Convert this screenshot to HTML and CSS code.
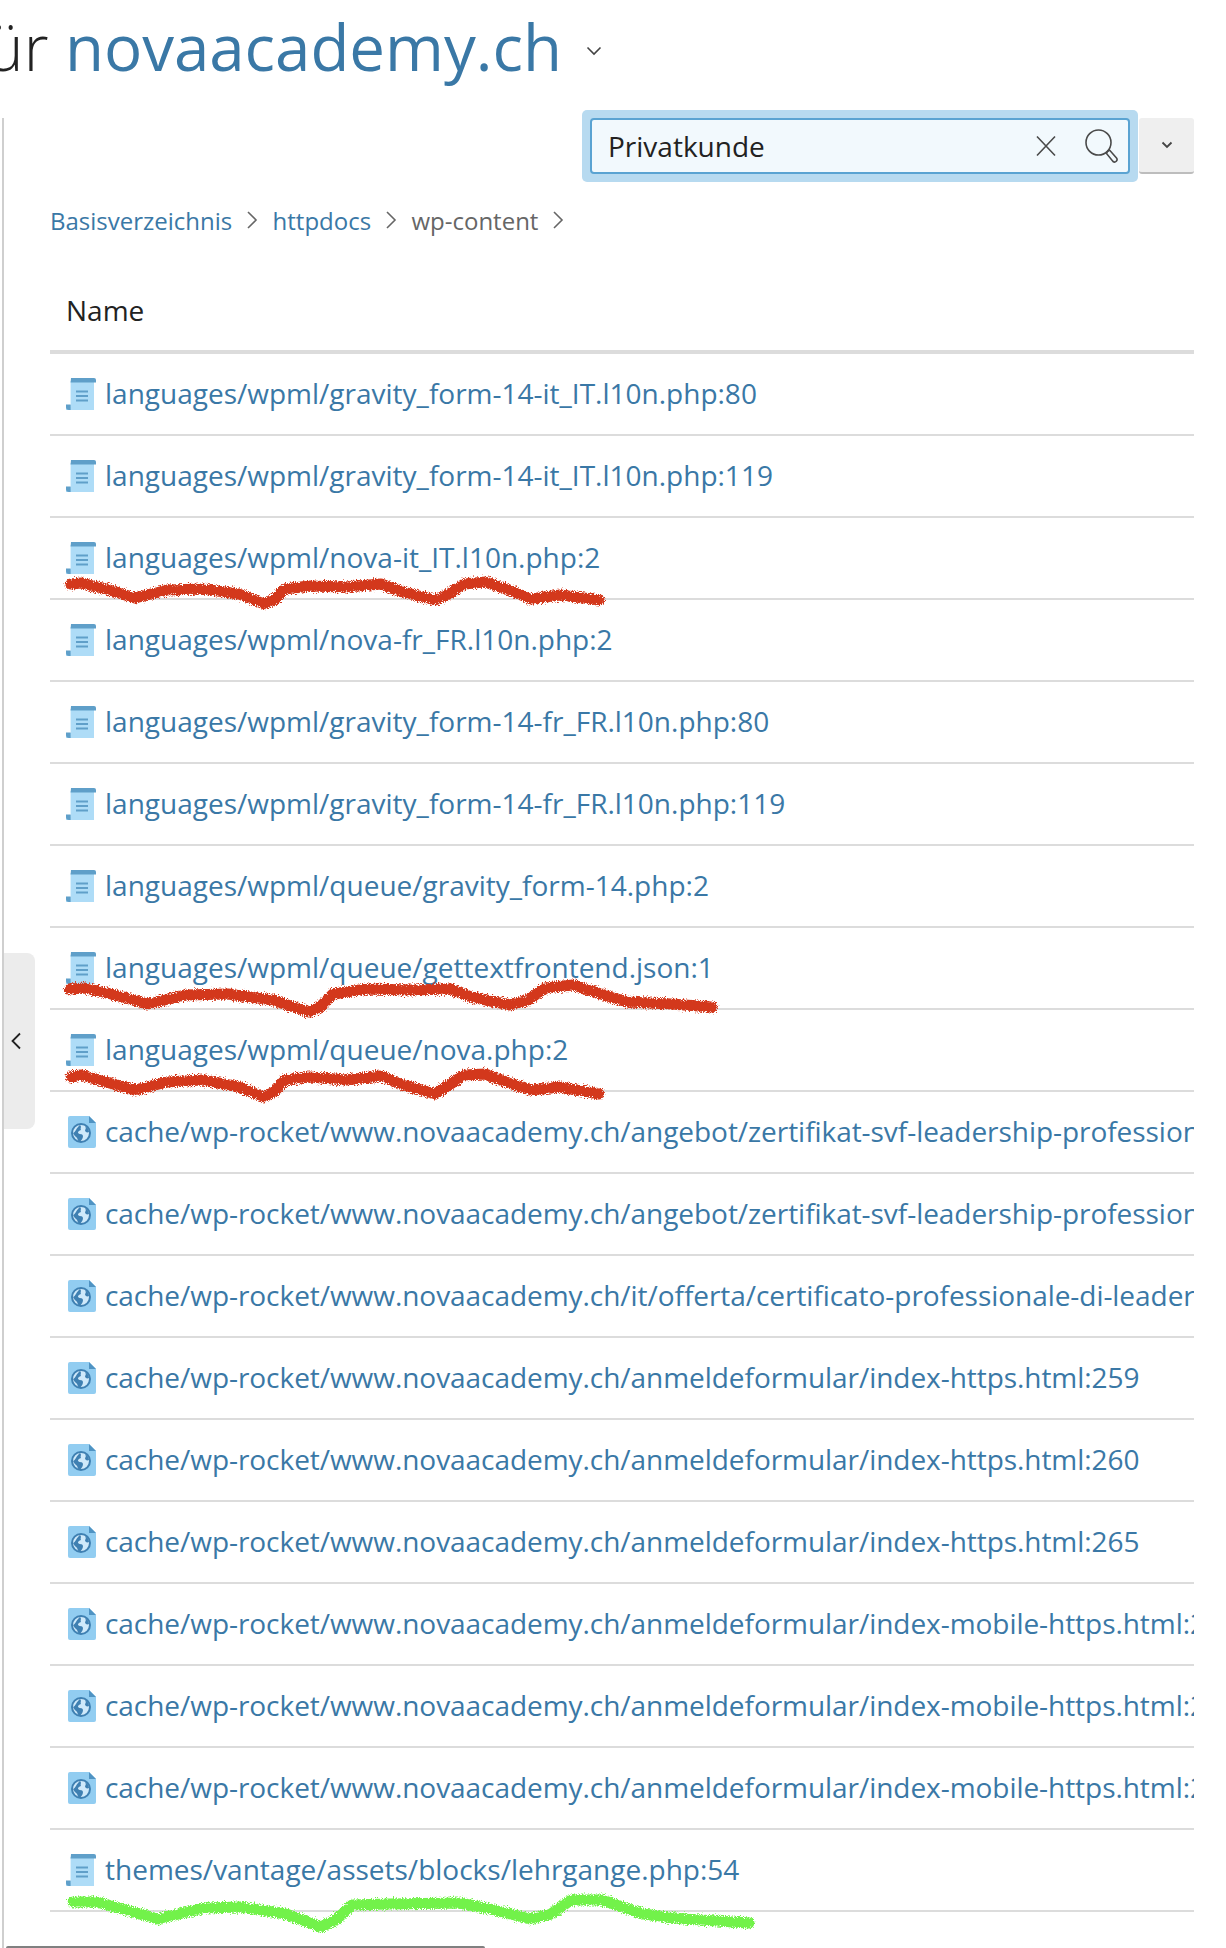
FILE: index.html
```html
<!DOCTYPE html>
<html lang="de">
<head>
<meta charset="utf-8">
<title>Dateien für novaacademy.ch</title>
<link rel="stylesheet" href="styles.css">
</head>
<body>
<svg class="defs" width="0" height="0">
  <defs>
    <filter id="rough" x="-5%" y="-50%" width="110%" height="200%" color-interpolation-filters="sRGB">
      <feTurbulence type="fractalNoise" baseFrequency="0.9" numOctaves="2" seed="4" result="n"/>
      <feDisplacementMap in="SourceGraphic" in2="n" scale="7" xChannelSelector="R" yChannelSelector="G"/>
    </filter>
    <symbol id="doc" viewBox="0 0 30 32">
      <path d="M4.600 3H28v29H0v-5h4.600z" fill="#aedcf7"/>
      <path d="M5 0h23a2 2 0 0 1 2 2v2.400H4.600z" fill="#5f9fc9"/>
      <path d="M0 26.500h4.600V32H3a3 3 0 0 1-3-3z" fill="#5f9fc9"/>
      <path d="M10 13.500h12M10 18h12M10 22.500h12" stroke="#5f9fc9" stroke-width="2"/>
    </symbol>
    <symbol id="web" viewBox="0 0 28 32">
      <path d="M2 0h19l7 7v23a2 2 0 0 1-2 2H2a2 2 0 0 1-2-2V2a2 2 0 0 1 2-2z" fill="#92cdf1"/>
      <path d="M21 0l7 7h-7z" fill="#4f93c3"/>
      <circle cx="13" cy="17" r="9" fill="#cfe9fa" stroke="#3f80b2" stroke-width="2"/>
      <path d="M5 17c3-1 3-5 7-8 2 2 0 3 1 5-2 1-3 1-3 3 2 2 4 0 5 3 0 3-2 4-3 6-3-1-2-4-4-5-1-1-2-2-3-4zM17 10c2 1 4 3 4 6-2 1-4 0-4-2 1-1 1-2 0-4z" fill="#3f80b2"/>
    </symbol>
  </defs>
</svg>

<header class="title">
  <h1 class="title-text"><span class="title-prefix">für</span> <a class="title-link">novaacademy.ch</a></h1>
  <svg class="title-caret" width="16" height="10" viewBox="0 0 16 10"><path d="M1.500 1.500L8 8l6.500-6.500" fill="none" stroke="#444" stroke-width="1.600"/></svg>
</header>

<main class="panel">
  <button class="side-toggle" aria-label="Einklappen">
    <svg width="12" height="18" viewBox="0 0 12 18"><path d="M10 1.500L2.500 9l7.500 7.500" fill="none" stroke="#222" stroke-width="1.800"/></svg>
  </button>

  <div class="toolbar">
    <div class="search-ring">
      <div class="search">
        <span class="search-value">Privatkunde</span>
        <svg class="search-clear" width="24" height="24" viewBox="0 0 24 24"><path d="M3 2.500l18 19M21 2.500l-18 19" fill="none" stroke="#4a4a4a" stroke-width="1.600"/></svg>
        <svg class="search-icon" width="34" height="36" viewBox="0 0 34 36"><circle cx="14.500" cy="14.500" r="12.500" fill="none" stroke="#4a4a4a" stroke-width="1.600"/><path d="M23.500 23.500l2-1.500 7 8a2.500 2.500 0 0 1-3.500 3.500l-6.500-8z" fill="none" stroke="#4a4a4a" stroke-width="1.600"/></svg>
      </div>
    </div>
    <button class="search-more" aria-label="Mehr">
      <svg width="12" height="8" viewBox="0 0 12 8"><path d="M1.500 1.500L6 6l4.500-4.500" fill="none" stroke="#444" stroke-width="1.800"/></svg>
    </button>
  </div>

  <nav class="crumbs">
    <a class="crumb">Basisverzeichnis</a>
    <svg class="crumb-sep" width="12" height="20" viewBox="0 0 12 20"><path d="M2 2l8 8-8 8" fill="none" stroke="#666" stroke-width="1.600"/></svg>
    <a class="crumb">httpdocs</a>
    <svg class="crumb-sep" width="12" height="20" viewBox="0 0 12 20"><path d="M2 2l8 8-8 8" fill="none" stroke="#666" stroke-width="1.600"/></svg>
    <span class="crumb crumb-current">wp-content</span>
    <svg class="crumb-sep" width="12" height="20" viewBox="0 0 12 20"><path d="M2 2l8 8-8 8" fill="none" stroke="#666" stroke-width="1.600"/></svg>
  </nav>

  <section class="table">
    <div class="table-head">Name</div>
    <div class="row"><svg class="ic ic-doc"><use href="#doc"/></svg><a class="row-link">languages/wpml/gravity_form-14-it_IT.l10n.php:80</a></div>
    <div class="row"><svg class="ic ic-doc"><use href="#doc"/></svg><a class="row-link">languages/wpml/gravity_form-14-it_IT.l10n.php:119</a></div>
    <div class="row"><svg class="ic ic-doc"><use href="#doc"/></svg><a class="row-link">languages/wpml/nova-it_IT.l10n.php:2</a></div>
    <div class="row"><svg class="ic ic-doc"><use href="#doc"/></svg><a class="row-link">languages/wpml/nova-fr_FR.l10n.php:2</a></div>
    <div class="row"><svg class="ic ic-doc"><use href="#doc"/></svg><a class="row-link">languages/wpml/gravity_form-14-fr_FR.l10n.php:80</a></div>
    <div class="row"><svg class="ic ic-doc"><use href="#doc"/></svg><a class="row-link">languages/wpml/gravity_form-14-fr_FR.l10n.php:119</a></div>
    <div class="row"><svg class="ic ic-doc"><use href="#doc"/></svg><a class="row-link">languages/wpml/queue/gravity_form-14.php:2</a></div>
    <div class="row"><svg class="ic ic-doc"><use href="#doc"/></svg><a class="row-link">languages/wpml/queue/gettextfrontend.json:1</a></div>
    <div class="row"><svg class="ic ic-doc"><use href="#doc"/></svg><a class="row-link">languages/wpml/queue/nova.php:2</a></div>
    <div class="row"><svg class="ic ic-web"><use href="#web"/></svg><a class="row-link">cache/wp-rocket/www.novaacademy.ch/angebot/zertifikat-svf-leadership-professional/index-https.html:259</a></div>
    <div class="row"><svg class="ic ic-web"><use href="#web"/></svg><a class="row-link">cache/wp-rocket/www.novaacademy.ch/angebot/zertifikat-svf-leadership-professional/index-https.html:260</a></div>
    <div class="row"><svg class="ic ic-web"><use href="#web"/></svg><a class="row-link">cache/wp-rocket/www.novaacademy.ch/it/offerta/certificato-professionale-di-leadership/index-https.html:259</a></div>
    <div class="row"><svg class="ic ic-web"><use href="#web"/></svg><a class="row-link">cache/wp-rocket/www.novaacademy.ch/anmeldeformular/index-https.html:259</a></div>
    <div class="row"><svg class="ic ic-web"><use href="#web"/></svg><a class="row-link">cache/wp-rocket/www.novaacademy.ch/anmeldeformular/index-https.html:260</a></div>
    <div class="row"><svg class="ic ic-web"><use href="#web"/></svg><a class="row-link">cache/wp-rocket/www.novaacademy.ch/anmeldeformular/index-https.html:265</a></div>
    <div class="row"><svg class="ic ic-web"><use href="#web"/></svg><a class="row-link">cache/wp-rocket/www.novaacademy.ch/anmeldeformular/index-mobile-https.html:259</a></div>
    <div class="row"><svg class="ic ic-web"><use href="#web"/></svg><a class="row-link">cache/wp-rocket/www.novaacademy.ch/anmeldeformular/index-mobile-https.html:260</a></div>
    <div class="row"><svg class="ic ic-web"><use href="#web"/></svg><a class="row-link">cache/wp-rocket/www.novaacademy.ch/anmeldeformular/index-mobile-https.html:265</a></div>
    <div class="row"><svg class="ic ic-doc"><use href="#doc"/></svg><a class="row-link">themes/vantage/assets/blocks/lehrgange.php:54</a></div>
  </section>
  <div class="scrollbar"></div>
</main>

<svg class="scribbles" width="1226" height="1948" viewBox="0 0 1226 1948">
  <g fill="none" stroke-width="11" stroke-linecap="round" stroke-linejoin="round" filter="url(#rough)">
    <polyline stroke="#d3381c" points="71,584 81,583 106,589 135,598 167,590 203,589 239,594 264,604 274,600 285,589 310,586 346,587 381,584 403,592 435,600 449,594 464,584 485,582 506,589 531,599 560,595 599,600"/>
    <polyline stroke="#d3381c" points="70,989 85,988 111,994 148,1004 185,995 228,994 272,1000 309,1012 320,1007 333,994 367,989 411,990 450,989 471,997 510,1005 528,1000 545,988 573,985 601,994 627,1002 671,1004 712,1007"/>
    <polyline stroke="#d3381c" points="71,1077 81,1075 106,1082 135,1090 167,1082 203,1080 239,1087 264,1097 274,1092 285,1080 310,1077 346,1080 381,1076 403,1085 435,1094 449,1085 464,1075 485,1074 506,1082 531,1090 560,1087 599,1094"/>
    <polyline stroke="#72f24a" points="73,1902 97,1902 122,1909 158,1919 204,1908 240,1907 286,1914 321,1927 337,1919 352,1905 388,1904 459,1903 490,1909 531,1919 551,1914 571,1900 602,1900 643,1914 684,1919 749,1923"/>
  </g>
</svg>
</body>
</html>
```

FILE: styles.css
```css
* { box-sizing: border-box; }
html, body { margin: 0; padding: 0; }
body {
  position: relative;
  width: 1226px;
  height: 1948px;
  overflow: hidden;
  background: #fff;
  color: #222;
  font-family: "Open Sans", "Noto Sans", sans-serif;
}
a { color: #3a78a6; text-decoration: none; }
.defs { position: absolute; }

.title {
  display: flex;
  align-items: center;
  height: 118px;
  padding-bottom: 24px;
  white-space: nowrap;
}
.title-text {
  margin: 0 0 0 -33px;
  font-size: 63.6px;
  font-weight: 300;
  line-height: 96px;
}
.title-link { font-weight: 400; color: #3a78a6; }
.title-caret { margin-left: 24px; margin-top: 8px; }

.panel {
  display: flow-root;
  position: relative;
  height: 1830px;
  margin-left: 2px;
  padding: 0 32px 0 46px;
  border-left: 2px solid #cfcfcf;
}
.side-toggle {
  position: absolute;
  left: 0;
  top: 835px;
  display: flex;
  align-items: center;
  padding: 0 0 0 6px;
  width: 31px;
  height: 176px;
  border: 0;
  border-radius: 0 8px 8px 0;
  background: #ececec;
}

.toolbar { display: flex; justify-content: flex-end; height: 72px; margin-top: -8px; }
.search-ring {
  width: 556px;
  height: 72px;
  margin-right: 1px;
  padding: 8px;
  border-radius: 5px;
  background: #b7daf0;
}
.search {
  display: flex;
  align-items: center;
  height: 56px;
  padding: 0 10px 0 16px;
  border: 2px solid #5aa3d2;
  border-radius: 4px;
  background: #f2f9fd;
}
.search-value { flex: 1; font-size: 28px; color: #222; }
.search-clear { margin-right: 26px; }
.search-more {
  display: flex;
  align-items: center;
  justify-content: center;
  width: 55px;
  height: 56px;
  margin-top: 8px;
  border: 0;
  border-bottom: 2px solid #bdbdbd;
  border-radius: 3px;
  background: #efefef;
}

.crumbs {
  display: flex;
  align-items: center;
  height: 48px;
  margin-top: 14px;
  font-size: 24px;
}
.crumb-sep { margin: 0 14.5px 0 13.8px; }
.crumb-current { color: #666; }

.table { margin-top: 28px; overflow: hidden; }
.table-head {
  height: 82px;
  padding: 8px 0 0 16px;
  border-bottom: 4px solid #dcdcdc;
  font-size: 28px;
  line-height: 60px;
  color: #222;
}
.row {
  display: flex;
  align-items: center;
  height: 82px;
  padding-left: 16px;
  border-bottom: 2px solid #dcdcdc;
  white-space: nowrap;
  overflow: hidden;
}
.ic { flex: none; }
.ic-doc { width: 30px; height: 32px; margin-right: 9px; }
.ic-web { width: 28px; height: 32px; margin: 0 9px 0 2px; }
.row-link { font-size: 28px; line-height: 40px; margin-top: -2px; }
.ic-web + .row-link { letter-spacing: -0.05px; }

.scrollbar {
  position: absolute;
  left: 2px;
  bottom: 0;
  width: 479px;
  height: 2px;
  border-radius: 2px 2px 0 0;
  background: #808080;
}
.scribbles { position: absolute; left: 0; top: 0; pointer-events: none; }
```
